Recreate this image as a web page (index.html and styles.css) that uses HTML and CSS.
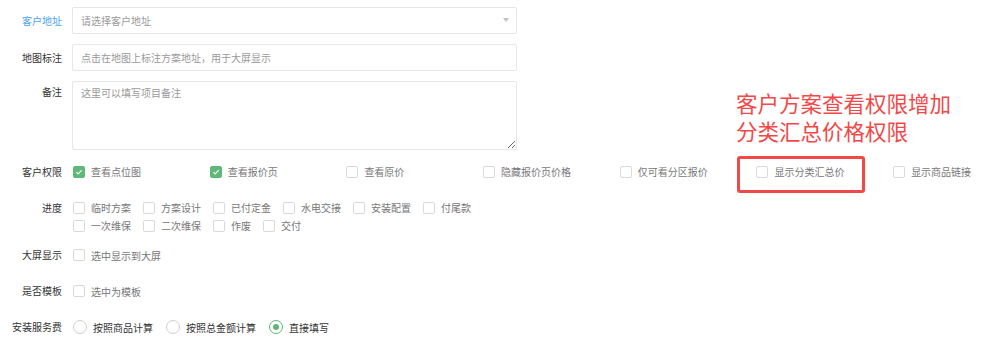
FILE: index.html
```html
<!DOCTYPE html>
<html lang="zh-CN">
<head>
    <meta charset="UTF-8">
    <meta name="viewport" content="width=device-width, initial-scale=1.0">
    <title>方案设置</title>
    <link rel="stylesheet" href="styles.css">
</head>
<body>
    <div class="form">
        <div class="form-item">
            <label class="form-label active">客户地址</label>
            <div class="input-block select">
                <input type="text" class="input" placeholder="请选择客户地址" readonly>
                <i class="select-arrow"></i>
            </div>
        </div>

        <div class="form-item">
            <label class="form-label">地图标注</label>
            <div class="input-block">
                <input type="text" class="input" placeholder="点击在地图上标注方案地址，用于大屏显示">
            </div>
        </div>

        <div class="form-item item-textarea">
            <label class="form-label label-top">备注</label>
            <div class="input-block">
                <textarea class="textarea" placeholder="这里可以填写项目备注"></textarea>
            </div>
        </div>

        <div class="form-item">
            <label class="form-label">客户权限</label>
            <div class="perm-grid">
                <span class="check"><i class="check-box on"><svg viewBox="0 0 12 12"><path d="M2.8 6.2 L5 8.3 L9.3 3.8" /></svg></i>查看点位图</span>
                <span class="check"><i class="check-box on"><svg viewBox="0 0 12 12"><path d="M2.8 6.2 L5 8.3 L9.3 3.8" /></svg></i>查看报价页</span>
                <span class="check"><i class="check-box"></i>查看原价</span>
                <span class="check"><i class="check-box"></i>隐藏报价页价格</span>
                <span class="check"><i class="check-box"></i>仅可看分区报价</span>
                <span class="check"><i class="check-box"></i>显示分类汇总价</span>
                <span class="check"><i class="check-box"></i>显示商品链接</span>
            </div>
        </div>

        <div class="form-item item-progress">
            <label class="form-label label-line">进度</label>
            <div class="check-wrap">
                <span class="check"><i class="check-box"></i>临时方案</span>
                <span class="check"><i class="check-box"></i>方案设计</span>
                <span class="check"><i class="check-box"></i>已付定金</span>
                <span class="check"><i class="check-box"></i>水电交接</span>
                <span class="check"><i class="check-box"></i>安装配置</span>
                <span class="check"><i class="check-box"></i>付尾款</span>
                <span class="check"><i class="check-box"></i>一次维保</span>
                <span class="check"><i class="check-box"></i>二次维保</span>
                <span class="check"><i class="check-box"></i>作废</span>
                <span class="check"><i class="check-box"></i>交付</span>
            </div>
        </div>

        <div class="form-item item-small">
            <label class="form-label">大屏显示</label>
            <div class="check-row">
                <span class="check"><i class="check-box"></i>选中显示到大屏</span>
            </div>
        </div>

        <div class="form-item item-small">
            <label class="form-label">是否模板</label>
            <div class="check-row">
                <span class="check"><i class="check-box"></i>选中为模板</span>
            </div>
        </div>

        <div class="form-item item-small">
            <label class="form-label">安装服务费</label>
            <div class="check-row">
                <span class="radio"><i class="radio-circle"></i>按照商品计算</span>
                <span class="radio"><i class="radio-circle"></i>按照总金额计算</span>
                <span class="radio"><i class="radio-circle on"></i>直接填写</span>
            </div>
        </div>

        <!-- annotation on top of the screenshot -->
        <div class="note">客户方案查看权限增加<br>分类汇总价格权限</div>
        <div class="note-box"></div>
    </div>
</body>
</html>
```

FILE: styles.css
```css
body {
    margin: 0;
    font-family: "Noto Sans CJK SC", "Microsoft YaHei", sans-serif;
    font-size: 10px;
    color: #777;
    background-color: #fff;
}
.form {
    position: relative;
    padding-top: 7px;
}
.form-item {
    display: flex;
    margin-bottom: 10px;
}
.form-label {
    flex-shrink: 0;
    width: 62px;
    margin-right: 10px;
    text-align: right;
    line-height: 27px;
    color: #333;
}
.form-label.active {
    color: #4ba3f0;
}
.label-top {
    line-height: 22px;
}
.input-block {
    width: 445px;
}
.select {
    position: relative;
}
.input {
    display: block;
    width: 100%;
    height: 27px;
    box-sizing: border-box;
    padding: 0 8px;
    border: 1px solid #e6e6e6;
    border-radius: 2px;
    font: inherit;
    color: #333;
    outline: none;
}
.input::placeholder,
.textarea::placeholder {
    color: #9a9a9a;
}
.select-arrow {
    position: absolute;
    right: 8px;
    top: 11px;
    border-top: 4px solid #c2c2c2;
    border-left: 3.5px solid transparent;
    border-right: 3.5px solid transparent;
}
.item-textarea {
    margin-bottom: 8px;
}
.textarea {
    display: block;
    width: 100%;
    height: 69px;
    box-sizing: border-box;
    padding: 2px 8px;
    border: 1px solid #e6e6e6;
    border-radius: 2px;
    font: inherit;
    line-height: 18px;
    color: #333;
    outline: none;
}

/* checkboxes */
.perm-grid {
    display: grid;
    grid-template-columns: repeat(7, 136.7px);
    align-items: center;
    margin-left: 1px;
}
.check {
    display: inline-flex;
    align-items: center;
    line-height: 27px;
    white-space: nowrap;
}
.check-box {
    display: inline-flex;
    width: 12px;
    height: 12px;
    box-sizing: border-box;
    margin-right: 6px;
    border: 1px solid #d9d9d9;
    border-radius: 2px;
}
.check-box.on {
    background-color: #5fb878;
    border-color: #5fb878;
}
.check-box svg {
    width: 10px;
    height: 10px;
    fill: none;
    stroke: #fff;
    stroke-width: 1.3;
}
.item-progress {
    padding-top: 4px;
    margin-bottom: 7px;
}
.label-line {
    line-height: 18px;
}
.check-wrap {
    display: flex;
    flex-wrap: wrap;
    width: 445px;
    margin-left: 1px;
}
.check-wrap .check {
    line-height: 18px;
    margin-right: 12px;
}
.item-small .form-label {
    line-height: 26px;
}
.check-row {
    display: flex;
    align-items: center;
    height: 26px;
    margin-left: 1px;
}

/* radios */
.radio {
    display: inline-flex;
    align-items: center;
    margin-right: 13px;
    color: #333;
}
.radio-circle {
    display: inline-flex;
    align-items: center;
    justify-content: center;
    width: 14px;
    height: 14px;
    box-sizing: border-box;
    margin-right: 6px;
    border: 1px solid #cfcfcf;
    border-radius: 50%;
}
.radio-circle.on {
    border-color: #5fb878;
}
.radio-circle.on::after {
    content: "";
    width: 6px;
    height: 6px;
    border-radius: 50%;
    background-color: #5fb878;
}

/* red annotation */
.note {
    position: absolute;
    left: 736px;
    top: 89px;
    font-size: 21.5px;
    line-height: 28px;
    color: #f24848;
}
.note-box {
    position: absolute;
    left: 737px;
    top: 156px;
    width: 128px;
    height: 37px;
    box-sizing: border-box;
    border: 3px solid #f24848;
    border-radius: 3px;
}
```
